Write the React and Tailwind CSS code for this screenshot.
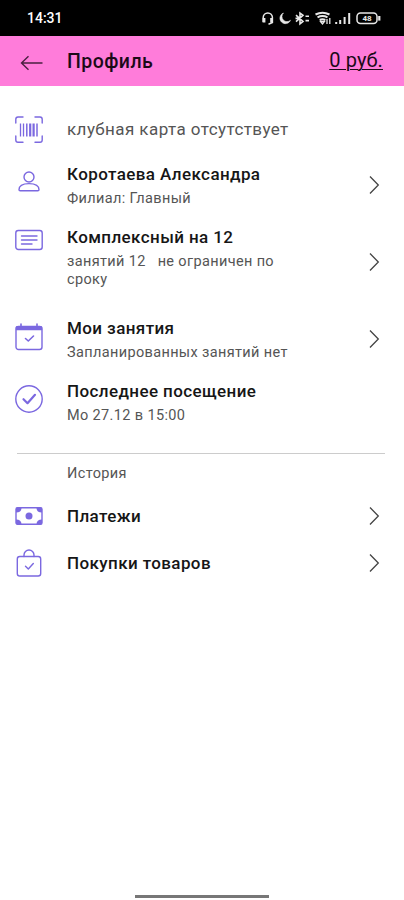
function Svg({ children, className }) {
  return (
    <svg
      viewBox="0 0 28 28"
      width="28"
      height="28"
      fill="none"
      stroke="currentColor"
      strokeWidth="1.4"
      strokeLinecap="round"
      strokeLinejoin="round"
      className={className}
    >
      {children}
    </svg>
  );
}

function BarcodeIcon() {
  return (
    <Svg>
      <path d="M.8 7V3.2Q.8 1 3 1H8M20 1h5q2.200 0 2.200 2.200V7M27.200 20v4q0 2.200-2.200 2.200h-5M8 26.200H3Q.8 26.200.8 24v-4" />
      <path d="M5.500 7.500v13M8.500 7.500v13" strokeWidth="1.300" strokeLinecap="butt" />
      <path d="M11.800 7.500v13M22 7.500v13" strokeWidth="1.500" strokeLinecap="butt" />
      <path d="M15.200 7.500v13M18.600 7.500v13" strokeWidth="2.200" strokeLinecap="butt" />
    </Svg>
  );
}

function PersonIcon() {
  return (
    <Svg>
      <circle cx="14" cy="9" r="5" />
      <path d="M4 21.800c0-4 4-6.200 10-6.200s10 2.200 10 6.200q0 1-1.200 1H5.200q-1.200 0-1.200-1z" />
    </Svg>
  );
}

function CardIcon() {
  return (
    <Svg>
      <rect x=".8" y="4.500" width="26.400" height="19" rx="2.500" />
      <path d="M6.500 10h15.500M6.500 14h15.500M6.500 18h10.500" />
    </Svg>
  );
}

function CalendarIcon() {
  return (
    <Svg>
      <rect x="1" y="3.500" width="26" height="23" rx="2.500" />
      <path d="M1.500 4h25v2.500h-25z" fill="currentColor" />
      <path d="M6 1v3M22 1v3" strokeWidth="1.600" />
      <path d="M10.500 15.500l2.800 2.500 5.200-5" strokeWidth="1.600" />
    </Svg>
  );
}

function CheckCircleIcon() {
  return (
    <Svg>
      <circle cx="14" cy="14" r="13.200" />
      <path d="M8.500 14.200l4 4 7.500-8.400" strokeWidth="2.200" />
    </Svg>
  );
}

function MoneyIcon() {
  return (
    <Svg>
      <rect x="1" y="5.800" width="26" height="16.400" rx="1.500" />
      <circle cx="14" cy="14" r="3.500" fill="currentColor" stroke="none" />
      <path
        d="M1 5.800h5.500q0 4.800-5.500 4.800zM27 5.800h-5.500q0 4.800 5.500 4.800zM1 22.200h5.500q0-4.800-5.500-4.800zM27 22.200h-5.500q0-4.800 5.500-4.800z"
        fill="currentColor"
        stroke="none"
      />
    </Svg>
  );
}

function BagIcon() {
  return (
    <Svg>
      <rect x="2.300" y="7.500" width="23.400" height="19.500" rx="2.500" />
      <path d="M9 7.500V6a5 5 0 0 1 10 0v1.500" />
      <path d="M10.500 17.300l2.800 2.700 5-5.500" />
    </Svg>
  );
}

function Chevron({ className }) {
  return (
    <svg
      viewBox="0 0 12 20"
      width="12"
      height="20"
      fill="none"
      stroke="#444"
      strokeWidth="1.3"
      className={className}
    >
      <path d="M2 1.500L10.300 10 2 18.500" />
    </svg>
  );
}

function StatusBar() {
  return (
    <div className="flex h-9 items-center justify-between bg-black pr-[23px] pl-[27px] text-white">
      <span className="text-[14px] leading-4 font-medium">14:31</span>
      <svg width="122" height="16" viewBox="0 0 122 16" fill="none" stroke="#e8e8e8" strokeWidth="1.500">
        {/* headset */}
        <path d="M4.200 12V7.500a4.600 4.600 0 0 1 9.200 0v5L9.500 14.200" />
        <path d="M5 8v4.500M12.600 8v4.500" strokeWidth="2.800" />
        {/* moon */}
        <path
          d="M24.500 3a5.500 5.500 0 1 0 7 7.200 4.100 4.100 0 0 1-7-7.200z"
          fill="#e8e8e8"
          strokeWidth="0.500"
        />
        {/* bluetooth */}
        <path d="M37 5.200l7 6.200-3 2.400V3.200l3 2.200-7 6.200M46.500 6.200H50M46.500 10.600H50M36.500 8.400h4" strokeWidth="1.600" />
        {/* wifi */}
        <path d="M56.500 4.500q7-3.500 14 0M58.500 7.300q5-2.600 10 0M60.700 10q2.800-1.500 5.600 0" strokeWidth="2" />
        <path d="M61.500 11.500l2 2.500 2-2.500zM68 9v5M70.800 8v6" strokeWidth="1.300" />
        {/* signal */}
        <path d="M77.200 12v2M81.200 10v4M85.600 7v7M90.200 3v11" strokeWidth="2" />
        {/* battery */}
        <rect x="98" y="3" width="20" height="10.600" rx="3.500" />
        <path d="M120.300 6v4.600" strokeWidth="2.200" />
        <text
          x="108"
          y="11.200"
          textAnchor="middle"
          fill="#e8e8e8"
          stroke="none"
          className="text-[8px] font-bold"
        >
          48
        </text>
      </svg>
    </div>
  );
}

function Header() {
  return (
    <header className="flex h-[50px] items-center bg-[#ff7cda] pr-[21px] pl-5 text-[#1c0a18]">
      <svg
        width="24"
        height="16"
        viewBox="0 0 24 16"
        fill="none"
        stroke="#4a2040"
        strokeWidth="1.400"
        className="mt-1"
      >
        <path d="M22.500 8H1.500M8.500 1.300L1.500 8l7 6.700" />
      </svg>
      <h1 className="mt-0.5 ml-[23px] text-[19.5px] leading-6 font-medium tracking-[0.45px]">
        Профиль
      </h1>
      <span className="mb-0.5 ml-auto text-[20px] leading-6 tracking-[0.1px] underline decoration-1 underline-offset-2">
        0 руб.
      </span>
    </header>
  );
}

function Row({ icon, iconClass, title, children, chevronClass, className }) {
  return (
    <div className={`flex items-start ${className}`}>
      <div className={`w-[52px] shrink-0 text-[#7b68e0] ${iconClass}`}>{icon}</div>
      <div className="flex-1">
        <div className="text-[17px] leading-[30px] font-medium tracking-[0.4px] text-[#161616]">
          {title}
        </div>
        {children && (
          <div className="-mb-px w-[230px] pt-px text-[14.5px] leading-[18px] tracking-[0.36px] text-[#555]">
            {children}
          </div>
        )}
      </div>
      {chevronClass && <Chevron className={chevronClass} />}
    </div>
  );
}

export default function App() {
  return (
    <div className="flex h-[900px] w-[404px] flex-col overflow-hidden bg-white font-['Roboto',sans-serif]">
      <StatusBar />
      <Header />

      <main className="pr-6 pl-[15px]">
        <div className="mt-[29px] flex h-[30px] items-center">
          <div className="w-[52px] text-[#7b68e0]">
            <BarcodeIcon />
          </div>
          <span className="text-[17px] tracking-[0.43px] text-[#555]">клубная карта отсутствует</span>
        </div>

        <Row
          className="mt-[14px]"
          icon={<PersonIcon />}
          iconClass="mt-[9px]"
          title="Коротаева Александра"
          chevronClass="mt-4"
        >
          Филиал: Главный
        </Row>
        <Row
          className="mt-[15px]"
          icon={<CardIcon />}
          iconClass="mt-1"
          title="Комплексный на 12"
          chevronClass="mt-[30px]"
        >
          занятий 12 &nbsp; не ограничен по
          <br />
          сроку
        </Row>
        <Row
          className="mt-[25px]"
          icon={<CalendarIcon />}
          iconClass="mt-[10px]"
          title="Мои занятия"
          chevronClass="mt-4"
        >
          Запланированных занятий нет
        </Row>
        <Row
          className="mt-[15px]"
          icon={<CheckCircleIcon />}
          iconClass="mt-[9px]"
          title="Последнее посещение"
        >
          Мо 27.12 в 15:00
        </Row>
      </main>

      <section className="mt-[29px] pr-6 pl-[15px]">
        <div className="-mr-[5px] ml-0.5 h-px bg-[#ccc]" />
        <h2 className="mt-[11px] ml-[52px] text-[14.5px] leading-[18px] tracking-[0.36px] text-[#555]">
          История
        </h2>
        <Row
          className="mt-[18px]"
          icon={<MoneyIcon />}
          iconClass="mt-px"
          title="Платежи"
          chevronClass="mt-[5px]"
        />
        <Row
          className="mt-[17px]"
          icon={<BagIcon />}
          iconClass="mt-px"
          title="Покупки товаров"
          chevronClass="mt-[5px]"
        />
      </section>

      <div className="mx-auto mt-auto mb-0.5 h-[3px] w-[134px] bg-[#777]" />
    </div>
  );
}
